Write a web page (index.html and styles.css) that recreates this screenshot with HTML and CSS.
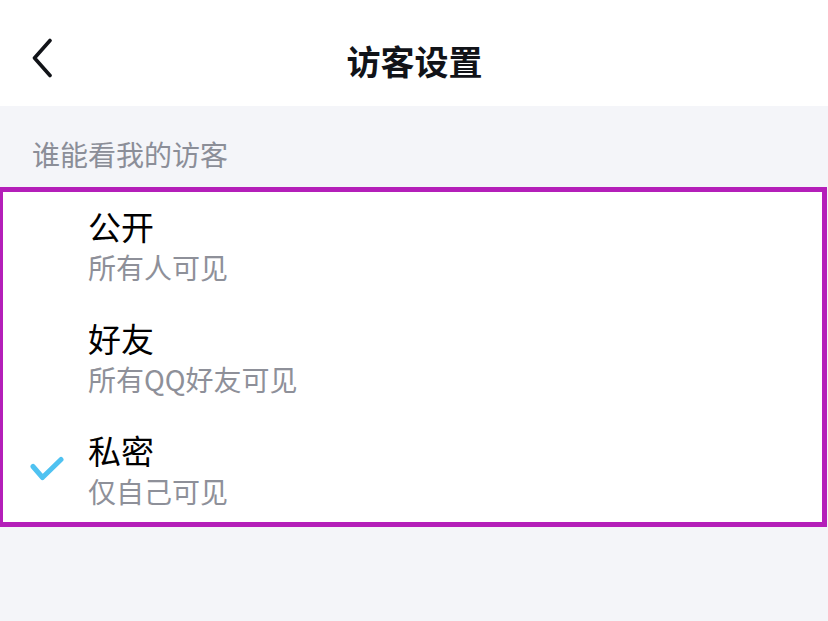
FILE: index.html
```html
<!DOCTYPE html>
<html lang="zh-CN">
<head>
<meta charset="utf-8">
<title>访客设置</title>
<link rel="stylesheet" href="styles.css">
</head>
<body>
<div class="page">
  <header class="header">
    <div class="header-row">
      <span class="back">
        <svg width="24" height="40" viewBox="0 0 24 40"><path d="M19 2.5 L3.5 20 L19 37.5" fill="none" stroke="#111318" stroke-width="3.6" stroke-linecap="round" stroke-linejoin="round"/></svg>
      </span>
      <h1 class="title">访客设置</h1>
    </div>
  </header>
  <div class="section-label">谁能看我的访客</div>
  <ul class="list">
    <li class="item">
      <span class="check"></span>
      <div class="texts">
        <div class="item-title">公开</div>
        <div class="item-sub">所有人可见</div>
      </div>
    </li>
    <li class="item">
      <span class="check"></span>
      <div class="texts">
        <div class="item-title">好友</div>
        <div class="item-sub">所有QQ好友可见</div>
      </div>
    </li>
    <li class="item">
      <span class="check">
        <svg width="34" height="28" viewBox="0 0 34 28"><path d="M3 10.5 L12.5 21.5 L31 3.5" fill="none" stroke="#4fc2f1" stroke-width="5" stroke-linecap="round" stroke-linejoin="round"/></svg>
      </span>
      <div class="texts">
        <div class="item-title">私密</div>
        <div class="item-sub">仅自己可见</div>
      </div>
    </li>
  </ul>
</div>
</body>
</html>
```
FILE: styles.css
```css
* { box-sizing: border-box; }
html, body {
  margin: 0;
  padding: 0;
  background: #f4f5f9;
  font-family: "Noto Sans CJK SC", "Noto Sans", sans-serif;
}
.page {
  width: 828px;
  height: 621px;
  overflow: hidden;
}
.header {
  background: #ffffff;
  height: 106px;
  padding-top: 16px;
}
.header-row {
  height: 90px;
  display: flex;
  align-items: center;
  position: relative;
}
.back {
  position: absolute;
  left: 31px;
  top: 42px;
  margin-top: -20px;
  display: flex;
}
.title {
  margin: 0;
  width: 100%;
  text-align: center;
  font-size: 34px;
  font-weight: 700;
  color: #111318;
  line-height: 44px;
  letter-spacing: 0;
  padding-left: 1px;
}
.section-label {
  padding: 30px 32px 15px;
  font-size: 28px;
  line-height: 36px;
  color: #8b8e98;
}
.list {
  list-style: none;
  margin: 0 1px 0 0;
  padding: 14px 0;
  background: #ffffff;
  border: 5px solid #b41fb9;
  border-left-width: 3px;
  display: flex;
  flex-direction: column;
  gap: 34px;
}
.item {
  display: flex;
  align-items: center;
}
.check {
  width: 85px;
  display: flex;
  padding-left: 27px;
  padding-top: 2px;
}
.texts {
  display: flex;
  flex-direction: column;
}
.item-title {
  font-size: 33px;
  line-height: 40px;
  color: #000000;
  margin-bottom: 4px;
}
.item-sub {
  font-size: 28px;
  line-height: 34px;
  color: #8e9099;
}
```
